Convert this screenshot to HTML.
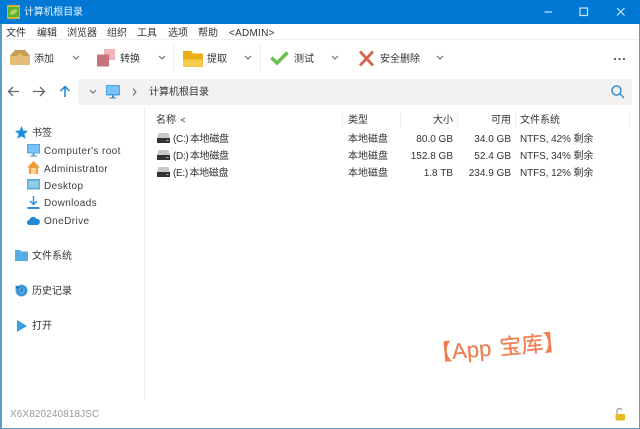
<!DOCTYPE html>
<html><head><meta charset="utf-8">
<style>
html,body{margin:0;padding:0}
body{width:640px;height:429px;position:relative;overflow:hidden;background:#fff;font-family:"Liberation Sans","Noto Sans CJK SC",sans-serif;color:#333}
#w{position:absolute;left:0;top:0;width:640px;height:429px;filter:blur(.3px)}
.t{position:absolute;white-space:nowrap;font-size:10px;line-height:14px;color:#333}
.r{text-align:right}
.s{letter-spacing:.4px;color:#3c3c3c}
.n{letter-spacing:-.1px}
svg{position:absolute;overflow:visible}
.b{position:absolute}
</style></head><body><div id="w">
<div class="b" style="left:0;top:0;width:640px;height:24px;background:#0078d4"></div>
<div class="b" style="left:0;top:24px;width:1.5px;height:405px;background:#5a9cc8"></div>
<div class="b" style="right:0;top:24px;width:1.5px;height:405px;background:#5a9cc8"></div>
<div class="b" style="left:0;top:427.5px;width:640px;height:1.5px;background:#5a9cc8"></div>
<svg style="left:7px;top:5px" width="13" height="14"><rect width="13" height="14" fill="#c8b53a"/><rect x="1" y="2" width="11" height="10" fill="#5db12f"/><ellipse cx="6.5" cy="7" rx="4" ry="2.2" fill="#a5d65a" transform="rotate(-35 6.5 7)"/></svg>
<div class="t" style="left:24px;top:6px;color:#e6f2fb;letter-spacing:-.2px">计算机根目录</div>
<svg style="left:544px;top:5px" width="90" height="14" fill="none" stroke="#cfe6f7" stroke-width="1.2"><path d="M0.5 7H8"/><rect x="36" y="3" width="7.5" height="7.5"/><path d="M73 3l7.500 7.500M80.500 3L73 10.500"/></svg>
<div class="t" style="left:6px;top:26.500px;">文件</div>
<div class="t" style="left:37px;top:26.500px;">编辑</div>
<div class="t" style="left:67px;top:26.500px;">浏览器</div>
<div class="t" style="left:107px;top:26.500px;">组织</div>
<div class="t" style="left:137px;top:26.500px;">工具</div>
<div class="t" style="left:168px;top:26.500px;">选项</div>
<div class="t" style="left:198px;top:26.500px;">帮助</div>
<div class="t" style="left:229px;top:26.500px;letter-spacing:.25px">&lt;ADMIN&gt;</div>
<div class="b" style="left:2px;top:39px;width:636px;height:1px;background:#efefef"></div>
<svg style="left:10px;top:49px" width="20" height="17"><path d="M0 6.500L5 1H15L20 6.500V16H0Z" fill="#e3bd77"/><path d="M0 7L5 1H15L20 7H13L10 4.500L7 7Z" fill="#c89d58"/></svg>
<div class="t" style="left:34px;top:53px">添加</div>
<svg style="left:72px;top:55px" width="8" height="6" fill="none" stroke="#666" stroke-width="1"><path d="M1 1l3 3 3-3"/></svg>
<svg style="left:97px;top:49px" width="18" height="18"><rect x="7" y="0" width="11" height="11" fill="#eeb4b8"/><rect y="5.500" width="12" height="12" fill="#c8737c"/></svg>
<div class="t" style="left:120px;top:53px">转换</div>
<svg style="left:158px;top:55px" width="8" height="6" fill="none" stroke="#666" stroke-width="1"><path d="M1 1l3 3 3-3"/></svg>
<div class="b" style="left:173px;top:44px;width:1px;height:28px;background:#eee"></div>
<svg style="left:183px;top:51px" width="20" height="16"><path d="M0 0H8L10 2.500H20V16H0Z" fill="#f6cb4c"/><path d="M0 0H8L10 2.500H20V8.500H0Z" fill="#e9ae14"/></svg>
<div class="t" style="left:207px;top:53px">提取</div>
<svg style="left:244px;top:55px" width="8" height="6" fill="none" stroke="#666" stroke-width="1"><path d="M1 1l3 3 3-3"/></svg>
<div class="b" style="left:260px;top:44px;width:1px;height:28px;background:#eee"></div>
<svg style="left:270px;top:51px" width="19" height="14" fill="none" stroke="#6ec04d" stroke-width="3.600"><path d="M1.500 6.500L7 12L17.500 1.500"/></svg>
<div class="t" style="left:294px;top:53px">测试</div>
<svg style="left:331px;top:55px" width="8" height="6" fill="none" stroke="#666" stroke-width="1"><path d="M1 1l3 3 3-3"/></svg>
<svg style="left:359px;top:51px" width="15" height="15" fill="none" stroke="#d9654d" stroke-width="2.800"><path d="M1 0.500L14 14.500M14 0.500L1 14.500"/></svg>
<div class="t" style="left:380px;top:53px">安全删除</div>
<svg style="left:436px;top:55px" width="8" height="6" fill="none" stroke="#666" stroke-width="1"><path d="M1 1l3 3 3-3"/></svg>
<svg style="left:613px;top:57px" width="14" height="4" fill="#555"><circle cx="2" cy="2" r="1.100"/><circle cx="6.500" cy="2" r="1.100"/><circle cx="11" cy="2" r="1.100"/></svg>
<svg style="left:7px;top:85px" width="70" height="13" fill="none" stroke-width="1.300"><path d="M12 6.500H1.500M6 2L1.500 6.500L6 11" stroke="#6a6a6a"/><path d="M26 6.500H37.500M33 2L37.500 6.500L33 11" stroke="#6a6a6a"/><path d="M58 12V1.500M53.500 6L58 1.500L62.500 6" stroke="#1383d6" stroke-width="1.500"/></svg>
<div class="b" style="left:78px;top:79px;width:554px;height:26px;background:#f3f2f3;border-radius:3px 0 0 3px"></div>
<svg style="left:89px;top:89px" width="8" height="6" fill="none" stroke="#666" stroke-width="1"><path d="M1 1l3 3 3-3"/></svg>
<svg style="left:106px;top:85px" width="14" height="14"><rect width="14" height="10.500" rx="1" fill="#42a2ec"/><rect x="1" y="1" width="12" height="8" fill="#79c0f5"/><rect x="6" y="10.500" width="2" height="2" fill="#4a88b8"/><rect x="3.500" y="12.500" width="7" height="1" fill="#4a88b8"/></svg>
<svg style="left:132px;top:88px" width="6" height="8" fill="none" stroke="#666" stroke-width="1"><path d="M1 0.500l3 3.500-3 3.500"/></svg>
<div class="t" style="left:149px;top:86px">计算机根目录</div>
<svg style="left:611px;top:85px" width="14" height="14" fill="none" stroke="#3a8ccb" stroke-width="1.500"><circle cx="5.500" cy="5.500" r="4.500"/><path d="M9 9l4 4"/></svg>
<div class="b" style="left:144px;top:108px;width:1px;height:292px;background:#eeeeee"></div>
<svg style="left:15px;top:126px" width="13" height="13"><path d="M6.500 0L8.300 4.500L13 4.900L9.400 8L10.500 12.800L6.500 10.200L2.500 12.800L3.600 8L0 4.900L4.700 4.500Z" fill="#1b8be0"/></svg>
<div class="t" style="left:32px;top:127px;">书签</div>
<svg style="left:27px;top:144px" width="13" height="13"><rect width="13" height="9.500" fill="#4ea6e8"/><rect x="1" y="1" width="11" height="7.500" fill="#7cc2f4"/><rect x="5.500" y="9.500" width="2" height="2" fill="#5a90b8"/><rect x="3" y="11.500" width="7" height="1" fill="#5a90b8"/></svg>
<div class="t s" style="left:44px;top:145px">Computer's root</div>
<svg style="left:27px;top:161px" width="13" height="13"><path d="M6.500 0L13 6.500H11V13H2V6.500H0Z" fill="#ef9a3c"/><rect x="4" y="7" width="5" height="6" fill="#fbd68e"/></svg>
<div class="t s" style="left:44px;top:163px">Administrator</div>
<svg style="left:27px;top:179px" width="13" height="11"><rect width="13" height="10.500" fill="#5cb0d8"/><rect x="1.500" y="2" width="10" height="6.500" fill="#92cce6"/></svg>
<div class="t s" style="left:44px;top:180px">Desktop</div>
<svg style="left:27px;top:196px" width="13" height="13" fill="none" stroke="#2a8fd8" stroke-width="1.400"><path d="M6.500 0V8M3 5l3.500 3.500L10 5"/><path d="M0.500 12H12.500" stroke-width="2"/></svg>
<div class="t s" style="left:44px;top:197px">Downloads</div>
<svg style="left:27px;top:216px" width="13" height="9"><path d="M2.500 9A2.500 2.500 0 0 1 2.300 4A4 4 0 0 1 9.500 2.700A3.200 3.200 0 0 1 10.500 9Z" fill="#2389d6"/></svg>
<div class="t s" style="left:44px;top:215px">OneDrive</div>
<svg style="left:15px;top:250px" width="13" height="11"><path d="M0 0H5L6.500 1.500H13V11H0Z" fill="#56ade6"/></svg>
<div class="t" style="left:32px;top:249.500px">文件系统</div>
<svg style="left:15px;top:284px" width="13" height="13"><circle cx="6.500" cy="6.500" r="6" fill="#52a9e8"/><circle cx="6.800" cy="6.800" r="4.200" fill="none" stroke="#1c6fb0" stroke-width=".8"/><path d="M0.500 1L4 3.500L0.800 5Z" fill="#1c6fb0"/><path d="M7 4V7H5" fill="none" stroke="#124f85" stroke-width=".8"/></svg>
<div class="t" style="left:32px;top:284.500px">历史记录</div>
<svg style="left:17px;top:320px" width="10" height="12"><path d="M0 0L10 6L0 12Z" fill="#36a0ec"/></svg>
<div class="t" style="left:32px;top:319.500px">打开</div>
<div class="t" style="left:156px;top:113.500px">名称</div>
<svg style="left:180px;top:117px" width="6" height="6" fill="none" stroke="#555"><path d="M5 1L1 3L5 5" stroke-width=".8"/></svg>
<div class="b" style="left:342px;top:112px;width:1px;height:16px;background:#eee"></div>
<div class="b" style="left:400px;top:112px;width:1px;height:16px;background:#eee"></div>
<div class="b" style="left:457px;top:112px;width:1px;height:16px;background:#eee"></div>
<div class="b" style="left:515px;top:112px;width:1px;height:16px;background:#eee"></div>
<div class="b" style="left:629px;top:112px;width:1px;height:16px;background:#eee"></div>
<div class="t" style="left:348px;top:113.500px">类型</div>
<div class="t r" style="left:395px;width:58px;top:113.500px">大小</div>
<div class="t r" style="left:452px;width:59px;top:113.500px">可用</div>
<div class="t" style="left:520px;top:113.500px">文件系统</div>
<svg style="left:157px;top:133px" width="13" height="10"><path d="M1.500 0H11.500L13 5H0Z" fill="#c9c9c9"/><rect y="5" width="13" height="5" fill="#333"/><rect x="9" y="7" width="2.500" height="1" fill="#7ccf5e"/></svg>
<div class="t n" style="left:173px;top:132.500px;word-spacing:-1px;letter-spacing:-.3px">(C:) 本地磁盘</div>
<div class="t" style="left:348px;top:132.500px">本地磁盘</div>
<div class="t r" style="left:395px;width:58px;top:132.500px">80.0 GB</div>
<div class="t r" style="left:452px;width:59px;top:132.500px">34.0 GB</div>
<div class="t n" style="left:520px;top:132.500px">NTFS, 42% 剩余</div>
<svg style="left:157px;top:150px" width="13" height="10"><path d="M1.500 0H11.500L13 5H0Z" fill="#c9c9c9"/><rect y="5" width="13" height="5" fill="#333"/><rect x="9" y="7" width="2.500" height="1" fill="#7ccf5e"/></svg>
<div class="t n" style="left:173px;top:149.500px;word-spacing:-1px;letter-spacing:-.3px">(D:) 本地磁盘</div>
<div class="t" style="left:348px;top:149.500px">本地磁盘</div>
<div class="t r" style="left:395px;width:58px;top:149.500px">152.8 GB</div>
<div class="t r" style="left:452px;width:59px;top:149.500px">52.4 GB</div>
<div class="t n" style="left:520px;top:149.500px">NTFS, 34% 剩余</div>
<svg style="left:157px;top:167px" width="13" height="10"><path d="M1.500 0H11.500L13 5H0Z" fill="#c9c9c9"/><rect y="5" width="13" height="5" fill="#333"/><rect x="9" y="7" width="2.500" height="1" fill="#7ccf5e"/></svg>
<div class="t n" style="left:173px;top:166.500px;word-spacing:-1px;letter-spacing:-.3px">(E:) 本地磁盘</div>
<div class="t" style="left:348px;top:166.500px">本地磁盘</div>
<div class="t r" style="left:395px;width:58px;top:166.500px">1.8 TB</div>
<div class="t r" style="left:452px;width:59px;top:166.500px">234.9 GB</div>
<div class="t n" style="left:520px;top:166.500px">NTFS, 12% 剩余</div>
<div class="t" style="left:430px;top:341px;font-size:22px;line-height:26px;color:#ef7d50;transform:rotate(-5deg);transform-origin:left center;letter-spacing:.1px;word-spacing:2px;-webkit-text-stroke:.2px #ef7d50">【App 宝库】</div>
<div class="t" style="left:10px;top:408px;color:#9a9a9a;letter-spacing:.1px">X6X820240818JSC</div>
<svg style="left:614px;top:408px" width="12" height="13"><path d="M3 6V3.500A2.500 2.500 0 0 1 8 2.500" fill="none" stroke="#999" stroke-width="1.200"/><rect x="1.500" y="6" width="9.500" height="6.500" rx="1.300" fill="#e7b81f"/></svg>
</div></body></html>
